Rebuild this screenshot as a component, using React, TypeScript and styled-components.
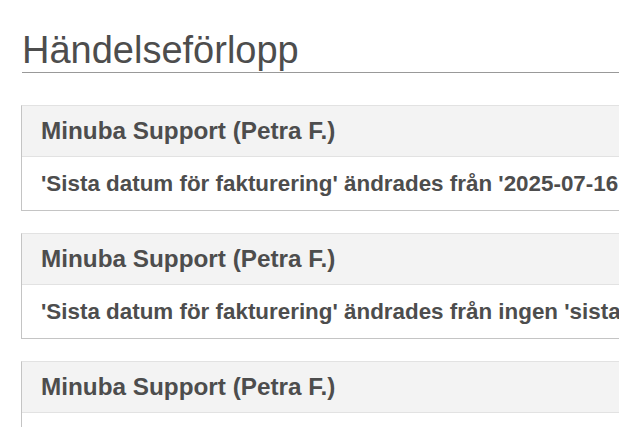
import React from 'react';
import styled, { createGlobalStyle } from 'styled-components';

const GlobalStyle = createGlobalStyle`
  html, body {
    margin: 0;
    padding: 0;
    background: #fff;
    overflow: hidden;
  }
  body {
    font-family: 'Liberation Sans', Arial, sans-serif;
    color: #4d4d4d;
  }
`;

const Page = styled.div`
  width: 1100px;
  padding: 28px 0 0 21px;
`;

const Title = styled.h1`
  margin: 0 0 32px 1px;
  font-size: 38px;
  font-weight: 400;
  line-height: 44px;
  color: #4d4d4d;
  border-bottom: 1px solid #999;
`;

const EventList = styled.div`
  display: flex;
  flex-direction: column;
  gap: 22px;
`;

const Card = styled.div`
  border: 1px solid #e2e2e2;
  border-left-color: #c4c4c4;
  border-bottom-color: #c4c4c4;
  background: #fff;
`;

const CardHeader = styled.div`
  background: #f3f3f3;
  border-bottom: 1px solid #e2e2e2;
  padding: 11px 19px;
  font-size: 24.3px;
  font-weight: 700;
  line-height: 28px;
  color: #4d4d4d;
  white-space: nowrap;
`;

const CardBody = styled.div`
  padding: 14px 19px 13px;
  font-size: 22.4px;
  font-weight: 700;
  line-height: 26px;
  color: #4d4d4d;
  white-space: nowrap;
`;

type EventItem = {
  author: string;
  change?: string;
};

const events: EventItem[] = [
  {
    author: 'Minuba Support (Petra F.)',
    change:
      "'Sista datum för fakturering' ändrades från '2025-07-16' till '2025-07-31'",
  },
  {
    author: 'Minuba Support (Petra F.)',
    change:
      "'Sista datum för fakturering' ändrades från ingen 'sista datum för fakturering' till '2025-07-16'",
  },
  {
    author: 'Minuba Support (Petra F.)',
    change: "'Status' ändrades från 'Ny' till 'Pågående'",
  },
];

const App: React.FC = () => (
  <>
    <GlobalStyle />
    <Page>
      <Title>Händelseförlopp</Title>
      <EventList>
        {events.map((ev, i) => (
          <Card key={i}>
            <CardHeader>{ev.author}</CardHeader>
            {ev.change && <CardBody>{ev.change}</CardBody>}
          </Card>
        ))}
      </EventList>
    </Page>
  </>
);

export default App;
